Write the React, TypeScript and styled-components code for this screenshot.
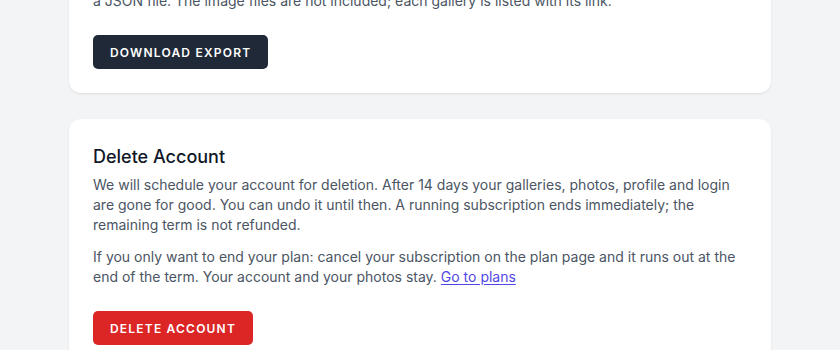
import React from "react";
import styled, { createGlobalStyle } from "styled-components";

const Global = createGlobalStyle`
  html, body { margin: 0; padding: 0; background: #f3f4f6; }
  body { font-family: Inter, "Noto Sans", sans-serif; -webkit-font-smoothing: antialiased; }
  * { box-sizing: border-box; }
`;

const Page = styled.main`
  width: 702px;
  margin: -33px auto 0;
  display: flex;
  flex-direction: column;
  gap: 26px;
`;

const Card = styled.section`
  background: #ffffff;
  border-radius: 12px;
  box-shadow: 0 1px 3px rgba(0, 0, 0, 0.06), 0 1px 2px rgba(0, 0, 0, 0.04);
  padding: 24px;
`;

const Title = styled.h2`
  margin: 0 0 4px;
  font-size: 18px;
  line-height: 28px;
  font-weight: 500;
  color: #111827;
`;

const Text = styled.p`
  margin: 0 0 12px;
  font-size: 14px;
  line-height: 20px;
  color: #4b5563;
`;

const Link = styled.a`
  color: #4f46e5;
  text-decoration: underline;
  text-underline-offset: 2px;
`;

const Button = styled.button<{ $tone: "dark" | "danger" }>`
  margin-top: 12px;
  height: 34px;
  padding: 0 17px;
  border: none;
  border-radius: 5px;
  background: ${(p) => (p.$tone === "danger" ? "#dc2626" : "#1f2937")};
  color: #ffffff;
  font-family: Inter, "Noto Sans", sans-serif;
  font-size: 12px;
  font-weight: 600;
  letter-spacing: 0.1em;
  text-transform: uppercase;
  cursor: pointer;
`;

export default function App() {
  return (
    <>
      <Global />
      <Page>
        <Card>
          <Text>a JSON file. The image files are not included; each gallery is listed with its link.</Text>
          <Button $tone="dark">Download Export</Button>
        </Card>
        <Card>
          <Title>Delete Account</Title>
          <Text>
            We will schedule your account for deletion. After 14 days your galleries, photos, profile and login
            are gone for good. You can undo it until then. A running subscription ends immediately; the
            remaining term is not refunded.
          </Text>
          <Text>
            If you only want to end your plan: cancel your subscription on the plan page and it runs out at the
            end of the term. Your account and your photos stay. <Link href="#">Go to plans</Link>
          </Text>
          <Button $tone="danger">Delete Account</Button>
        </Card>
      </Page>
    </>
  );
}
